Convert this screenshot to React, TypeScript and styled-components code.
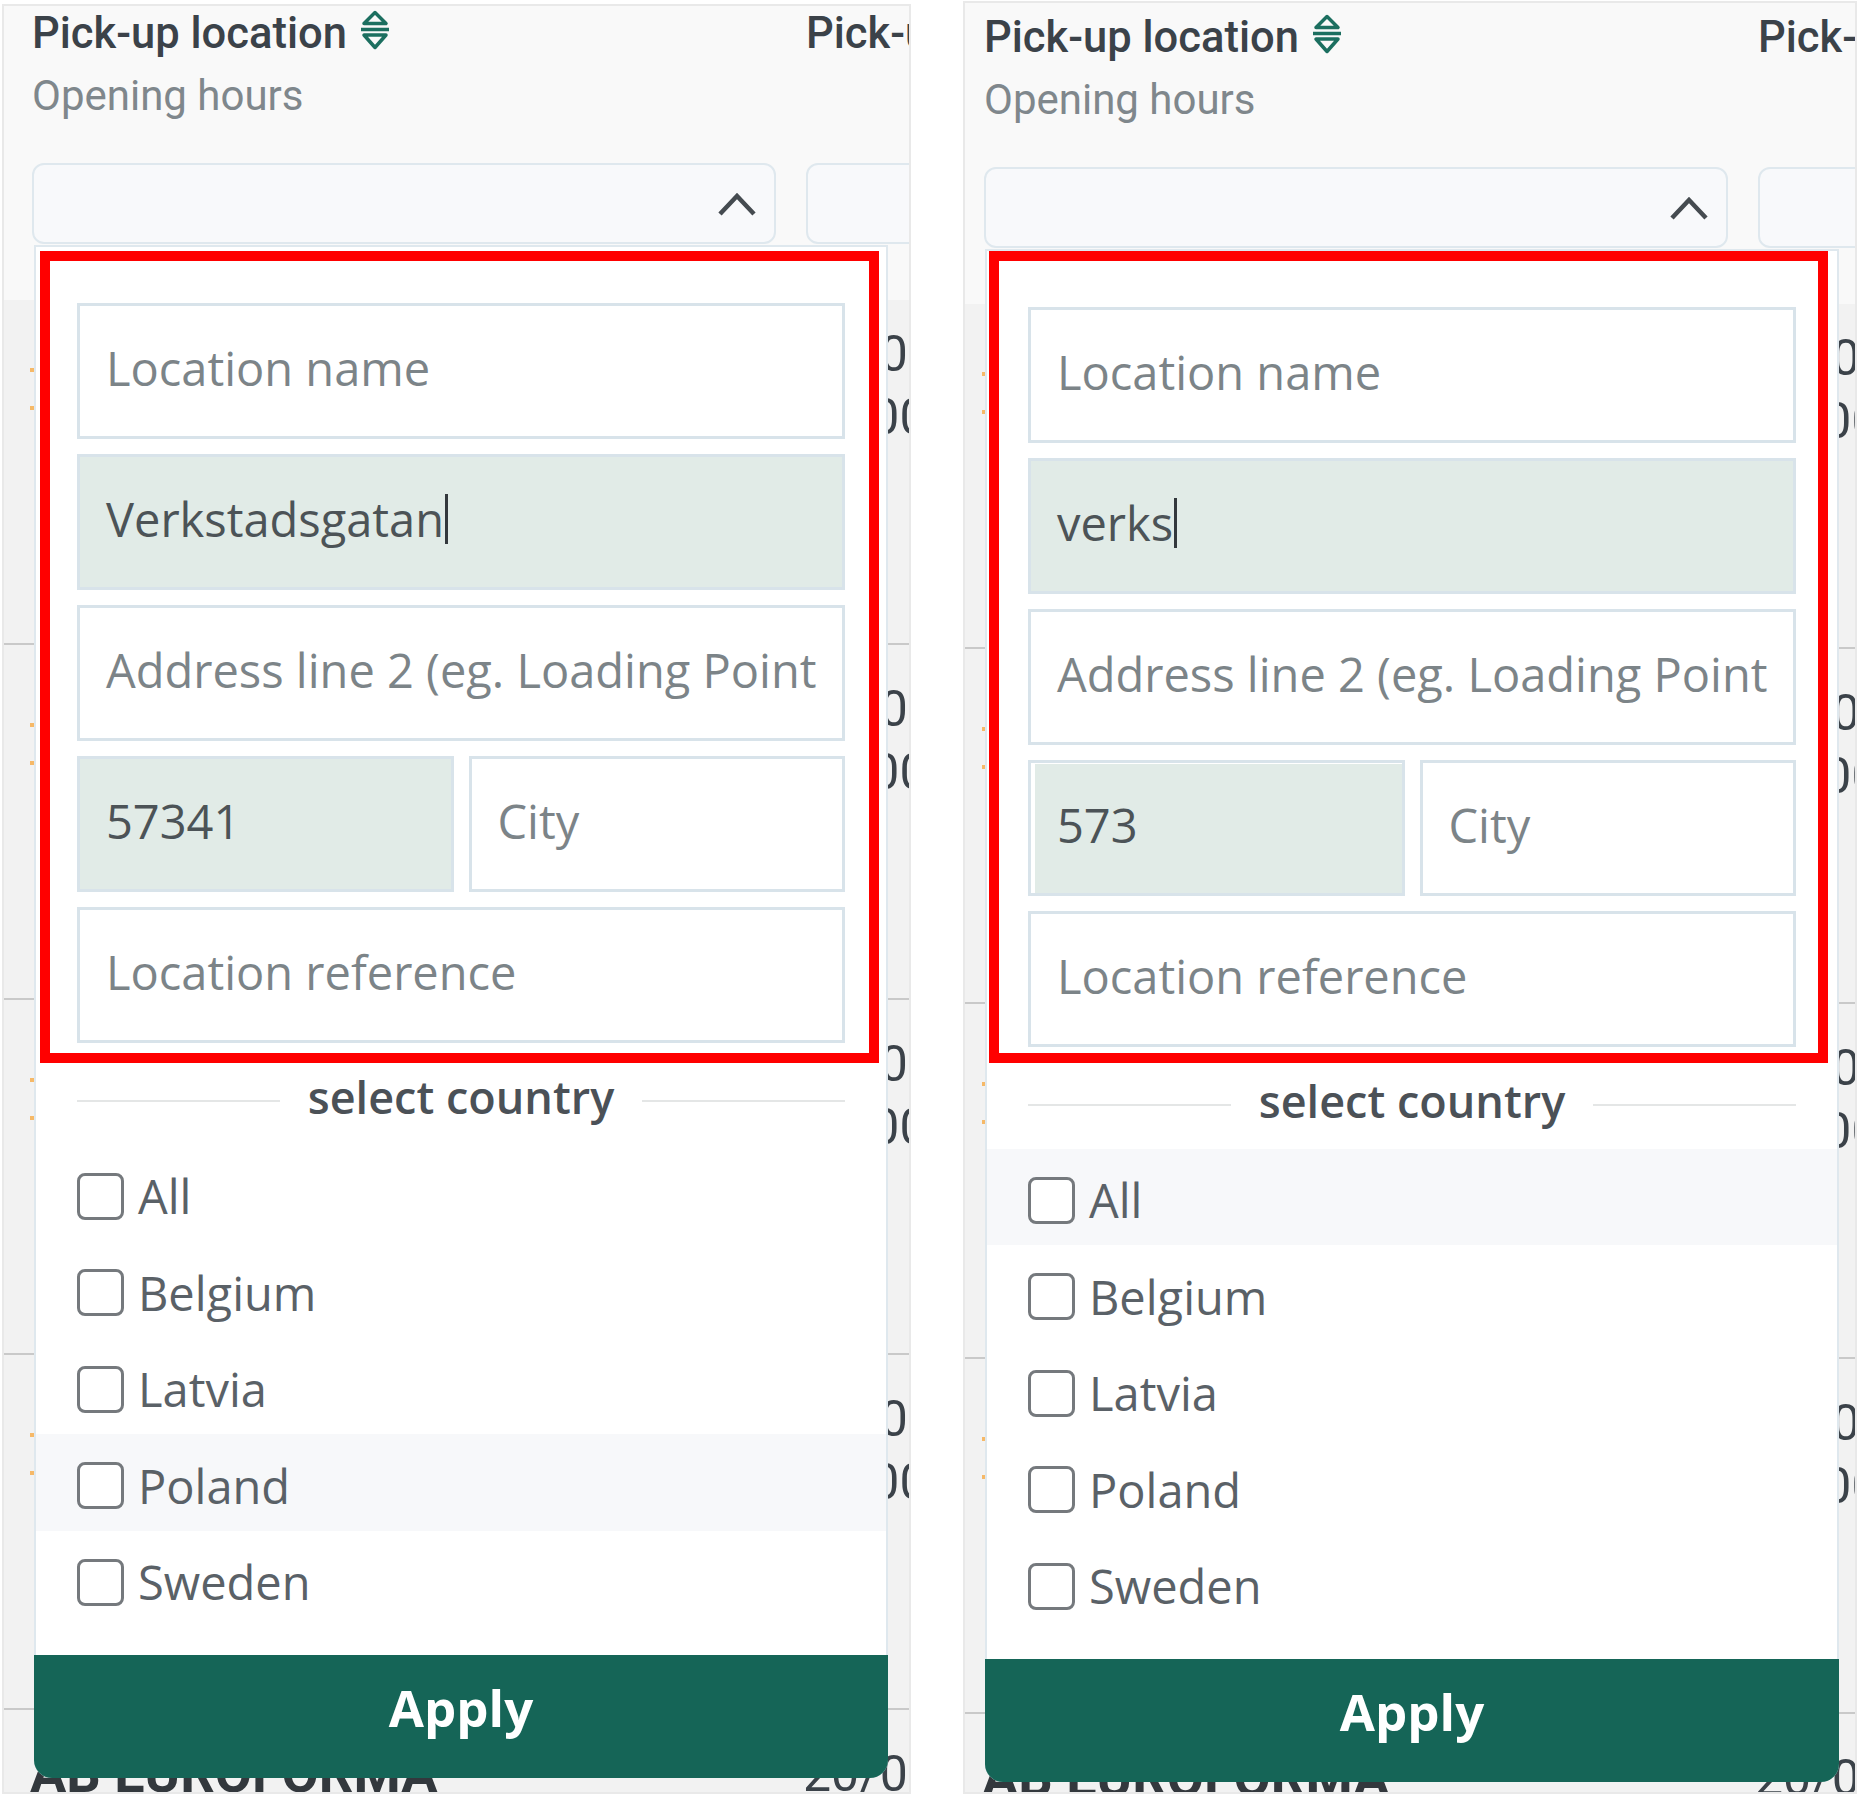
import styled, { createGlobalStyle } from 'styled-components';

const GlobalStyle = createGlobalStyle`
    body {
        margin: 0;
        background: #ffffff;
        font-family: "Roboto", "Liberation Sans", sans-serif;
    }
`;

const Page = styled.div`
    display: flex;
    gap: 52px;
    width: 1857px;
    height: 1796px;
    padding-left: 2px;
    box-sizing: border-box;
    overflow: hidden;
`;

const Panel = styled.section<{ $top: number; $width: number; $height: number }>`
    position: relative;
    flex: none;
    width: ${(p) => p.$width}px;
    height: ${(p) => p.$height}px;
    margin-top: ${(p) => p.$top}px;
    box-sizing: border-box;
    border: 2px solid #e9e9e9;
    background: #f2f2f2;
    overflow: hidden;
`;

const Head = styled.header<{ $pad: number; $left: number; $height: number }>`
    display: grid;
    grid-template-columns: 744px 400px;
    column-gap: 30px;
    align-content: start;
    height: ${(p) => p.$height}px;
    padding: ${(p) => p.$pad}px 0 0 ${(p) => p.$left}px;
    box-sizing: border-box;
    background: #f9f9f9;
`;

const HeadCell = styled.div`
    display: flex;
    flex-direction: column;
`;

const HeadTitle = styled.div`
    display: flex;
    align-items: center;
    gap: 13px;
    height: 44px;
    color: #3b4249;
    font-size: 43.5px;
    font-weight: 500;
    white-space: nowrap;
`;

const HeadSub = styled.div`
    height: 40px;
    margin-top: 21px;
    color: #7f878c;
    font-size: 42px;
    line-height: 40px;
    white-space: nowrap;
`;

const SelectBox = styled.div`
    display: flex;
    align-items: center;
    justify-content: flex-end;
    height: 81px;
    margin-top: 47px;
    padding-right: 18px;
    box-sizing: border-box;
    border: 2px solid #dfe8ee;
    border-radius: 12px;
    background: #f8f9fb;
`;

const TableRow = styled.div<{ $first?: boolean; $left: number }>`
    display: grid;
    grid-template-columns: 773px 1fr;
    height: ${(p) => (p.$first ? 345 : 355)}px;
    padding: ${(p) => (p.$first ? 35 : 45)}px 0 0 ${(p) => p.$left - 2}px;
    box-sizing: border-box;
    border-bottom: 2px solid #c9c9c9;
`;

const RowName = styled.div`
    color: #33383d;
    font-size: 54px;
    font-weight: 700;
    line-height: 38px;
    white-space: nowrap;
`;

const RowMarks = styled.div`
    display: flex;
    flex-direction: column;
    gap: 34px;
    margin-top: -5px;
`;

const RowMark = styled.span`
    width: 4px;
    height: 4px;
    background: #f6b968;
`;

const DateCell = styled.div`
    display: flex;
    flex-direction: column;
    gap: 25px;
    color: #3b4249;
    font-size: 50px;
    line-height: 38px;
    white-space: nowrap;
`;

const Dropdown = styled.div<{ $left: number; $top: number }>`
    position: absolute;
    left: ${(p) => p.$left}px;
    top: ${(p) => p.$top}px;
    display: flex;
    flex-direction: column;
    width: 854px;
    height: 1533px;
    box-sizing: border-box;
    border: 2px solid #dfe8ee;
    border-bottom: 0;
    border-radius: 0 0 18px 18px;
    background: #ffffff;
`;

const FieldGroup = styled.div<{ $shiftX: number; $shiftY: number }>`
    display: flex;
    flex-direction: column;
    gap: 15px;
    margin: ${(p) => 4 - p.$shiftY}px ${(p) => 7 + p.$shiftX}px ${(p) => p.$shiftY}px ${(p) => 4 - p.$shiftX}px;
    padding: ${(p) => 42 + p.$shiftY}px ${(p) => 24 - p.$shiftX}px ${(p) => 10 - p.$shiftY}px ${(p) => 27 + p.$shiftX}px;
    border: 10px solid #ff0000;
`;

const Field = styled.div<{ $filled?: boolean; $inset?: boolean }>`
    display: flex;
    align-items: center;
    flex: none;
    height: 136px;
    padding: 0 0 6px 26px;
    box-sizing: border-box;
    border: 3px solid #d8e3ea;
    background: ${(p) => (p.$filled ? '#e1ebe7' : '#ffffff')};
    box-shadow: ${(p) => (p.$inset ? 'inset 4px 1px 0 #ffffff' : 'none')};
    color: ${(p) => (p.$filled ? '#4c5357' : '#7c8488')};
    font-family: "Open Sans", sans-serif;
    font-size: 47px;
    white-space: nowrap;
    overflow: hidden;
`;

const Caret = styled.span`
    width: 2.5px;
    height: 50px;
    margin-left: 1px;
    background: #33383d;
`;

const FieldPair = styled.div`
    display: flex;
    gap: 15px;

    & > * {
        flex: 1;
    }
`;

const Divider = styled.div`
    display: flex;
    align-items: center;
    gap: 28px;
    height: 56px;
    margin-top: 5px;
    padding: 0 41px;
    color: #4b5157;
    font-family: "Open Sans", sans-serif;
    font-size: 45px;
    font-weight: 600;
    white-space: nowrap;

    &::before,
    &::after {
        content: '';
        flex: 1;
        height: 2px;
        margin-top: 10px;
        background: #e4e6e6;
    }
`;

const CountryList = styled.ul`
    margin: 20.5px 0 0;
    padding: 0;
    list-style: none;
`;

const CountryRow = styled.li<{ $active: boolean }>`
    display: flex;
    align-items: center;
    gap: 14px;
    height: 96.5px;
    padding: 7px 0 0 41px;
    box-sizing: border-box;
    background: ${(p) => (p.$active ? '#f7f8fa' : 'transparent')};
    color: #5a6167;
    font-family: "Open Sans", sans-serif;
    font-size: 47px;
`;

const CheckBox = styled.span`
    width: 47px;
    height: 47px;
    box-sizing: border-box;
    border: 3px solid #75797d;
    border-radius: 8px;
    background: #ffffff;
`;

const ApplyButton = styled.button`
    flex: none;
    height: 123px;
    margin: auto -2px 0;
    padding: 0 0 19px;
    border: 0;
    border-radius: 0 0 18px 18px;
    background: #156557;
    color: #ffffff;
    font-family: "Open Sans", sans-serif;
    font-size: 51px;
    font-weight: 700;
`;

const SortSvg = styled.svg`
    margin-top: -6px;
`;

const SortIcon = () => (
    <SortSvg width="30" height="40" viewBox="0 0 30 40" fill="none" stroke="#1c6f60" strokeWidth="3.5">
        <path d="M15 2.5 L26 13.5 H4 Z" strokeLinejoin="round" />
        <path d="M1 19.5 H29" />
        <path d="M4 25 H26 L15 37.5 Z" strokeLinejoin="round" />
    </SortSvg>
);

const ChevronUp = () => (
    <svg width="38" height="24" viewBox="0 0 38 24" fill="none" stroke="#454b50" strokeWidth="4.5">
        <path d="M2 22 L19 4 L36 22" />
    </svg>
);

const COUNTRIES = ['All', 'Belgium', 'Latvia', 'Poland', 'Sweden'];
const ROWS = ['', '', '', '', 'AB EUROFORMA'];

type LocationPanelProps = {
    top: number;
    width: number;
    height: number;
    headPad: number;
    headHeight: number;
    left: number;
    menuLeft: number;
    menuTop: number;
    shiftX: number;
    shiftY: number;
    street: string;
    zip: string;
    active: string;
    zipInset?: boolean;
};

function LocationPanel(props: LocationPanelProps) {
    const { top, width, height, headPad, headHeight, left, menuLeft, menuTop, shiftX, shiftY, street, zip, active, zipInset } = props;

    return (
        <Panel $top={top} $width={width} $height={height}>
            <Head $pad={headPad} $left={left} $height={headHeight}>
                <HeadCell>
                    <HeadTitle>
                        Pick-up location <SortIcon />
                    </HeadTitle>
                    <HeadSub>Opening hours</HeadSub>
                    <SelectBox>
                        <ChevronUp />
                    </SelectBox>
                </HeadCell>
                <HeadCell>
                    <HeadTitle>Pick-up date</HeadTitle>
                    <HeadSub />
                    <SelectBox />
                </HeadCell>
            </Head>

            {ROWS.map((name, i) => (
                <TableRow key={i} $first={i === 0} $left={left}>
                    <div>
                        <RowName>{name || '\u00a0'}</RowName>
                        {!name && (
                            <RowMarks>
                                <RowMark />
                                <RowMark />
                            </RowMarks>
                        )}
                    </div>
                    <DateCell>
                        <span>20/07/2020</span>
                        <span>10:00 (CET)</span>
                    </DateCell>
                </TableRow>
            ))}

            <Dropdown $left={menuLeft} $top={menuTop}>
                <FieldGroup $shiftX={shiftX} $shiftY={shiftY}>
                    <Field>Location name</Field>
                    <Field $filled>
                        {street}
                        <Caret />
                    </Field>
                    <Field>Address line 2 (eg. Loading Point</Field>
                    <FieldPair>
                        <Field $filled $inset={zipInset}>
                            {zip}
                        </Field>
                        <Field>City</Field>
                    </FieldPair>
                    <Field>Location reference</Field>
                </FieldGroup>

                <Divider>select country</Divider>

                <CountryList>
                    {COUNTRIES.map((country) => (
                        <CountryRow key={country} $active={country === active}>
                            <CheckBox />
                            {country}
                        </CountryRow>
                    ))}
                </CountryList>

                <ApplyButton>Apply</ApplyButton>
            </Dropdown>
        </Panel>
    );
}

function App() {
    return (
        <>
            <GlobalStyle />
            <Page>
                <LocationPanel
                    top={4}
                    width={909}
                    height={1790}
                    headPad={5}
                    headHeight={294}
                    left={28}
                    menuLeft={30}
                    menuTop={239}
                    shiftX={0}
                    shiftY={0}
                    street="Verkstadsgatan"
                    zip="57341"
                    active="Poland"
                />
                <LocationPanel
                    top={1}
                    width={894}
                    height={1793}
                    headPad={12}
                    headHeight={301}
                    left={19}
                    menuLeft={20}
                    menuTop={246}
                    shiftX={2}
                    shiftY={4}
                    street="verks"
                    zip="573"
                    active="All"
                    zipInset
                />
            </Page>
        </>
    );
}

export default App;
